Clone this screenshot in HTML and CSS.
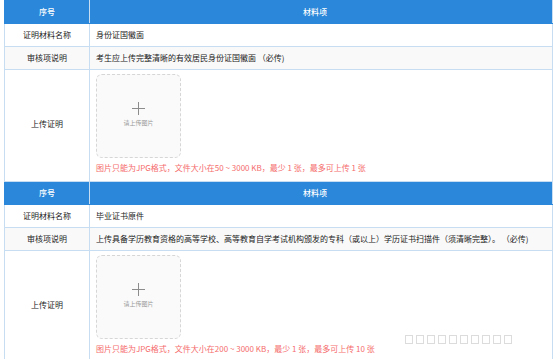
FILE: index.html
```html
<!DOCTYPE html>
<html lang="zh-CN">
<head>
    <meta charset="UTF-8">
    <title>材料上传</title>
    <link rel="stylesheet" href="styles.css">
</head>
<body>
    <div class="page">
        <table class="material-table">
            <tr class="head-row">
                <td class="label">序号</td>
                <td class="head-title">材料项</td>
            </tr>
            <tr>
                <td class="label">证明材料名称</td>
                <td>身份证国徽面</td>
            </tr>
            <tr class="gray-row">
                <td class="label">审核项说明</td>
                <td>考生应上传完整清晰的有效居民身份证国徽面 （必传)</td>
            </tr>
            <tr class="upload-row">
                <td class="label">上传证明</td>
                <td>
                    <div class="upload-box">
                        <span class="plus"></span>
                        <span class="upload-tip">请上传图片</span>
                    </div>
                    <p class="rule">图片只能为JPG格式，文件大小在50 ~ 3000 KB，最少 1 张，最多可上传 1 张</p>
                </td>
            </tr>
            <tr class="head-row">
                <td class="label">序号</td>
                <td class="head-title">材料项</td>
            </tr>
            <tr>
                <td class="label">证明材料名称</td>
                <td>毕业证书原件</td>
            </tr>
            <tr class="gray-row">
                <td class="label">审核项说明</td>
                <td>上传具备学历教育资格的高等学校、高等教育自学考试机构颁发的专科（或以上）学历证书扫描件（须清晰完整）。 （必传)</td>
            </tr>
            <tr class="upload-row">
                <td class="label">上传证明</td>
                <td>
                    <div class="upload-box">
                        <span class="plus"></span>
                        <span class="upload-tip">请上传图片</span>
                    </div>
                    <p class="rule">图片只能为JPG格式，文件大小在200 ~ 3000 KB，最少 1 张，最多可上传 10 张</p>
                </td>
            </tr>
        </table>

        <div class="watermark">
            <span></span><span></span><span></span><span></span><span></span>
            <span></span><span></span><span></span><span></span><span></span>
        </div>
    </div>
</body>
</html>
```

FILE: styles.css
```css
:root {
    --blue: #2a87d9;
    --line: #c6ddf2;
    --text: #222;
    --red: #f56c6c;
}

* {
    box-sizing: border-box;
    margin: 0;
    padding: 0;
}

body {
    background: #fff;
    font-family: "Noto Sans CJK SC", "Noto Sans", sans-serif;
    font-size: 8px;
    color: var(--text);
    overflow: hidden;
}

.page {
    position: relative;
    height: 359px;
    padding: 0 0 0 4px;
}

.material-table {
    width: 549px;
    border-collapse: collapse;
    border: 1px solid var(--line);
}

.material-table td {
    height: 23px;
    padding: 0 6px;
    border: 1px solid var(--line);
    line-height: 12px;
    vertical-align: middle;
}

.material-table td.label {
    width: 85px;
    text-align: center;
}

.head-row td {
    background: var(--blue);
    color: #fff;
    font-weight: 500;
    border-color: var(--blue);
    border-right-color: var(--line);
}

.head-title {
    text-align: center;
    padding-right: 18px !important;
}

.gray-row td {
    background: #f9f9f9;
}

.upload-row td {
    height: 111px;
    padding-top: 4px;
    padding-bottom: 7px;
}

.upload-box {
    width: 85px;
    height: 84px;
    border: 1px dashed #d6d6d6;
    border-radius: 6px;
    background: #fafafa;
    display: flex;
    flex-direction: column;
    align-items: center;
    justify-content: center;
    gap: 4px;
}

.plus {
    position: relative;
    width: 13px;
    height: 13px;
    margin-top: -4px;
}

.plus::before,
.plus::after {
    content: "";
    position: absolute;
    background: #8c8c8c;
}

.plus::before {
    left: 6px;
    top: 0;
    width: 1px;
    height: 13px;
}

.plus::after {
    left: 0;
    top: 6px;
    width: 13px;
    height: 1px;
}

.upload-tip {
    font-size: 6px;
    line-height: 8px;
    color: #999;
}

.rule {
    margin-top: 4px;
    color: var(--red);
    line-height: 12px;
}

.watermark {
    position: absolute;
    left: 405px;
    top: 335px;
    display: flex;
    gap: 3px;
}

.watermark span {
    width: 8px;
    height: 9px;
    border: 1px solid #dcdcdc;
}
```
